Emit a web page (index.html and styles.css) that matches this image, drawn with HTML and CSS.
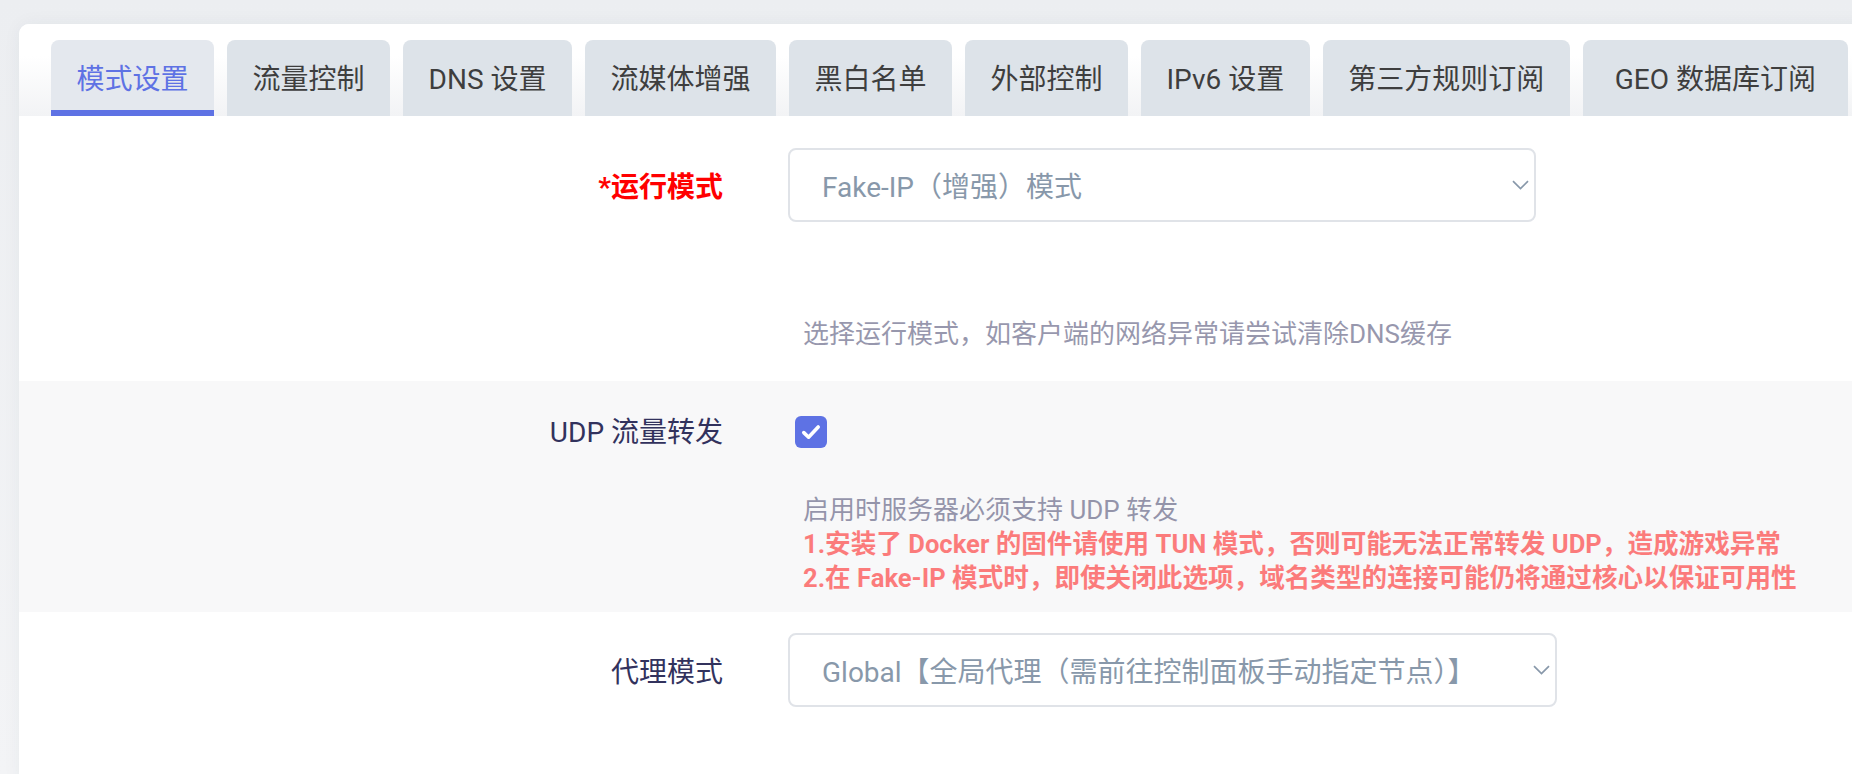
FILE: index.html
```html
<!DOCTYPE html>
<html lang="zh-CN">
<head>
<meta charset="utf-8">
<title>模式设置</title>
<link rel="stylesheet" href="styles.css">
</head>
<body>
<div class="card">
  <ul class="tabs">
    <li class="tab active">模式设置</li>
    <li class="tab">流量控制</li>
    <li class="tab">DNS 设置</li>
    <li class="tab">流媒体增强</li>
    <li class="tab">黑白名单</li>
    <li class="tab">外部控制</li>
    <li class="tab">IPv6 设置</li>
    <li class="tab">第三方规则订阅</li>
    <li class="tab tab-geo">GEO 数据库订阅</li>
    <li class="tab">其他设置</li>
  </ul>
  <div class="panel">
    <div class="row row-mode">
      <div class="label label-select required">*运行模式</div>
      <div class="field">
        <div class="select select-mode">
          <span class="select-text">Fake-IP（增强）模式</span>
          <svg class="chevron" width="17" height="10" viewBox="0 0 17 10"><path d="M1 1.2 L8.5 8.6 L16 1.2" fill="none" stroke="#8898aa" stroke-width="1.7"/></svg>
        </div>
        <div class="desc desc-mode">选择运行模式，如客户端的网络异常请尝试清除DNS缓存</div>
      </div>
    </div>
    <div class="row row-udp">
      <div class="label label-check">UDP 流量转发</div>
      <div class="field">
        <div class="check-wrap">
          <svg class="check" width="32" height="32" viewBox="0 0 32 32"><rect width="32" height="32" rx="6" fill="#5e72e4"/><path d="M8.8 16.6 L13.6 21.2 L23.2 11" fill="none" stroke="#fff" stroke-width="3.6" stroke-linecap="round" stroke-linejoin="round"/></svg>
        </div>
        <div class="desc desc-udp">
          <div>启用时服务器必须支持 UDP 转发</div>
          <div class="warn">1.安装了 Docker 的固件请使用 TUN 模式，否则可能无法正常转发 UDP，造成游戏异常</div>
          <div class="warn">2.在 Fake-IP 模式时，即使关闭此选项，域名类型的连接可能仍将通过核心以保证可用性</div>
        </div>
      </div>
    </div>
    <div class="row row-proxy">
      <div class="label label-select">代理模式</div>
      <div class="field">
        <div class="select select-proxy">
          <span class="select-text">Global【全局代理（需前往控制面板手动指定节点）】</span>
          <svg class="chevron" width="17" height="10" viewBox="0 0 17 10"><path d="M1 1.2 L8.5 8.6 L16 1.2" fill="none" stroke="#8898aa" stroke-width="1.7"/></svg>
        </div>
      </div>
    </div>
  </div>
</div>
</body>
</html>
```
FILE: styles.css
```css
html, body {
  margin: 0;
  height: 100%;
  overflow: hidden;
}

body {
  background: linear-gradient(to bottom, #eceef1 0%, #f3f4f6 100%);
  font-family: "Roboto", "Noto Sans CJK SC", sans-serif;
  font-size: 28px;
  color: #32325d;
}

.card {
  margin: 24px 0 0 19px;
  width: 1900px;
  background: #fff;
  border-radius: 10px 0 0 0;
  box-shadow: 0 0 18px rgba(40, 50, 70, 0.05);
}

.tabs {
  display: flex;
  flex-wrap: nowrap;
  gap: 13px;
  margin: 0;
  padding: 16px 0 0 32px;
  list-style: none;
  border-radius: 10px 0 0 0;
  background: linear-gradient(to bottom, #ffffff 35%, #f2f3f5 100%);
  white-space: nowrap;
}

.tab {
  flex: none;
  height: 76px;
  padding: 0 25.5px 2px;
  box-sizing: border-box;
  display: flex;
  align-items: center;
  border-radius: 8px 8px 0 0;
  background: #dde3e9;
  color: #3e3e3e;
  font-size: 28px;
}

.tab-geo {
  padding: 0 32px 2px;
}

.tab.active {
  background: #e4e8ee;
  color: #5e72e4;
  box-shadow: inset 0 -6px 0 #5e72e4;
}

.panel {
  background: #fff;
  border-radius: 8px 0 0 0;
  padding-bottom: 80px;
}

.row {
  display: grid;
  grid-template-columns: 704px 1fr;
  column-gap: 65px;
  align-items: start;
}

.row-mode {
  padding: 32px 0 30px;
}

.row-udp {
  padding: 35px 0 17px;
  background: #f8f8f9;
}

.row-proxy {
  padding: 21px 0 0;
}

.label {
  display: flex;
  align-items: center;
  justify-content: flex-end;
  color: #32325d;
  white-space: nowrap;
}

.label-select {
  height: 74px;
}

.label-check {
  height: 28px;
}

.required {
  color: #ff0000;
  font-weight: bold;
}

.field {
  display: flex;
  flex-direction: column;
  align-items: flex-start;
}

.select {
  height: 74px;
  box-sizing: border-box;
  border: 2px solid #e0e3e8;
  border-radius: 8px;
  background: #fff;
  display: flex;
  align-items: center;
  justify-content: space-between;
  padding: 0 5px 0 32px;
  color: #8898aa;
  white-space: nowrap;
}

.select-mode {
  width: 748px;
}

.select-proxy {
  width: 769px;
}

.chevron {
  flex: none;
  display: block;
}

.check-wrap {
  height: 32px;
  padding-left: 7px;
}

.check {
  display: block;
}

.desc {
  font-size: 26px;
  line-height: 34px;
  color: #32325d;
  opacity: 0.5;
  padding-left: 15px;
  white-space: nowrap;
}

.desc-mode {
  margin-top: 95px;
}

.desc-udp {
  margin-top: 45px;
}

.warn {
  color: #ff0000;
  font-weight: bold;
  font-size: 25.6px;
}
```
